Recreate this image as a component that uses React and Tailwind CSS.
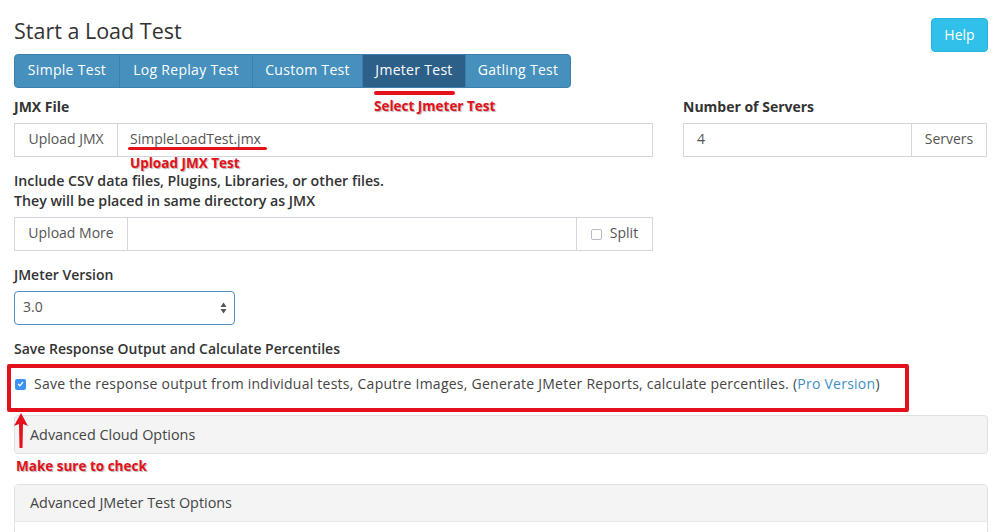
import React from "react";

const RED = "#e2111c";

function Annot({ className, children }) {
  return (
    <div
      className={`absolute font-bold text-[13.5px] leading-[15px] text-[#e2111c] whitespace-nowrap [text-shadow:1px_1px_1px_rgba(0,0,0,0.3)] ${className}`}
    >
      {children}
    </div>
  );
}

const tabs = [
  { t: "Simple Test", w: "w-[104px]" },
  { t: "Log Replay Test", w: "w-[133px]" },
  { t: "Custom Test", w: "w-[110px]" },
  { t: "Jmeter Test", w: "w-[103px]", active: true },
  { t: "Gatling Test", w: "flex-1" },
];

export default function App() {
  return (
    <div
      className="relative w-[996px] h-[532px] overflow-hidden bg-white pl-[14px] pr-[8px] text-[#333] text-[14px]"
      style={{ fontFamily: '"Open Sans", "Noto Sans", sans-serif' }}
    >
      {/* header */}
      <div className="flex justify-between items-start h-[54px]">
        <h1 className="pt-[16px] text-[21.5px] leading-[30px] font-normal text-[#333]">Start a Load Test</h1>
        <button className="mt-[18px] h-[34px] w-[57px] rounded-[4px] bg-[#31c0e9] border border-[#27b4dc] text-white text-[14px] pb-[2px]">
          Help
        </button>
      </div>

      {/* tabs */}
      <div className="flex w-[557px] h-[34px] rounded-[4px] overflow-hidden bg-[#4590bd] border border-[#3b80ad]">
        {tabs.map((x, i) => (
          <div
            key={x.t}
            className={`flex items-center justify-center pb-[3px] text-white text-[14px] tracking-[0.3px] ${x.w} ${
              i > 0 ? "border-l border-[#3b80ad]" : ""
            } ${x.active ? "bg-[#2d6089]" : ""}`}
          >
            {x.t}
          </div>
        ))}
      </div>

      {/* form columns */}
      <div className="flex gap-[30px] mt-[9px]">
        <div className="w-[639px]">
          <div className="font-bold leading-[20px]">JMX File</div>
          <div className="relative mt-[6px] flex h-[34px] border border-[#d3d6dc]">
            <div className="w-[103px] flex items-center justify-center pb-[3px] text-[#555] border-r border-[#d3d6dc]">Upload JMX</div>
            <div className="flex-1 flex items-center pb-[3px] pl-[12px] text-[#555]">SimpleLoadTest.jmx</div>
            <div className="absolute left-[113px] top-[23px] w-[139px] h-[3px] rounded-full bg-[#e2111c]" />
          </div>

          <div className="mt-[14px] font-semibold leading-[20px] text-[14.2px] text-[#333]">
            <div>Include CSV data files, Plugins, Libraries, or other files.</div>
            <div>They will be placed in same directory as JMX</div>
          </div>
          <div className="mt-[6px] flex h-[34px] border border-[#d3d6dc]">
            <div className="w-[113px] flex items-center justify-center pb-[3px] text-[#555] border-r border-[#d3d6dc]">Upload More</div>
            <div className="flex-1" />
            <div className="w-[76px] flex items-center justify-center pb-[3px] gap-[8px] text-[#555] border-l border-[#d3d6dc]">
              <span className="mt-[3px] w-[11px] h-[11px] rounded-[2px] border border-[#b9bcc2] bg-white" />
              Split
            </div>
          </div>

          <div className="mt-[14px] font-semibold leading-[20px]">JMeter Version</div>
          <div className="mt-[6px] flex items-center justify-between w-[221px] h-[34px] rounded-[4px] border border-[#4d8fc0] pl-[8px] pr-[7px] text-[#555]">
            <span className="pb-[3px]">3.0</span>
            <svg width="7" height="12" viewBox="0 0 7 12">
              <path d="M3.5 0.5 L6.5 5 L0.5 5 Z" fill="#555" />
              <path d="M3.5 11.5 L6.5 7 L0.5 7 Z" fill="#555" />
            </svg>
          </div>

          <div className="mt-[14px] font-semibold leading-[20px]">Save Response Output and Calculate Percentiles</div>
        </div>

        <div className="w-[304px]">
          <div className="font-bold leading-[20px]">Number of Servers</div>
          <div className="mt-[6px] flex h-[34px] border border-[#d3d6dc]">
            <div className="flex-1 flex items-center pb-[3px] pl-[13px] text-[#555]">4</div>
            <div className="w-[75px] flex items-center justify-center pb-[3px] text-[#555] border-l border-[#d3d6dc]">Servers</div>
          </div>
        </div>
      </div>

      {/* checkbox row */}
      <div className="mt-[15px] flex items-center h-[20px] whitespace-nowrap text-[#444] tracking-[0.25px]">
        <span className="ml-[1px] w-[11px] h-[11px] rounded-[2px] bg-[#3b92f3] flex items-center justify-center">
          <svg width="7" height="6" viewBox="0 0 7 6">
            <path d="M1 3 L2.8 4.8 L6 1" stroke="white" strokeWidth="1.3" fill="none" />
          </svg>
        </span>
        <span className="ml-[8px] pb-[1px]">
          Save the response output from individual tests, Caputre Images, Generate JMeter Reports, calculate percentiles. (
          <span className="text-[#3f8fc4]">Pro Version</span>)
        </span>
      </div>

      {/* panels */}
      <div className="mt-[21px] h-[39px] rounded-[4px] border border-[#e0e0e0] bg-[#f4f4f4] flex items-center pl-[15px] text-[14.4px] text-[#444]">
        Advanced Cloud Options
      </div>
      <div className="mt-[30px] rounded-[4px] border border-[#e0e0e0] h-[80px]">
        <div className="h-[37px] bg-[#f4f4f4] flex items-center pl-[15px] text-[14.4px] text-[#444] border-b border-[#eaeaea]">
          Advanced JMeter Test Options
        </div>
      </div>

      {/* annotations */}
      <div className="absolute left-[374px] top-[91px] w-[81px] h-[4px] rounded-full bg-[#e2111c]" />
      <Annot className="left-[374px] top-[99px]">Select Jmeter Test</Annot>
      <Annot className="left-[130px] top-[156px]">Upload JMX Test</Annot>
      <div className="absolute left-[7px] top-[364px] w-[902px] h-[48px] border-[4px] border-[#e2111c] rounded-[2px]" />
      <svg className="absolute left-[13px] top-[413px]" width="16" height="36" viewBox="0 0 16 36">
        <path d="M8 0 L15 13 L10 11 L9.5 35 L6.5 35 L6 11 L1 13 Z" fill={RED} />
      </svg>
      <Annot className="left-[16px] top-[459px]">Make sure to check</Annot>
    </div>
  );
}
